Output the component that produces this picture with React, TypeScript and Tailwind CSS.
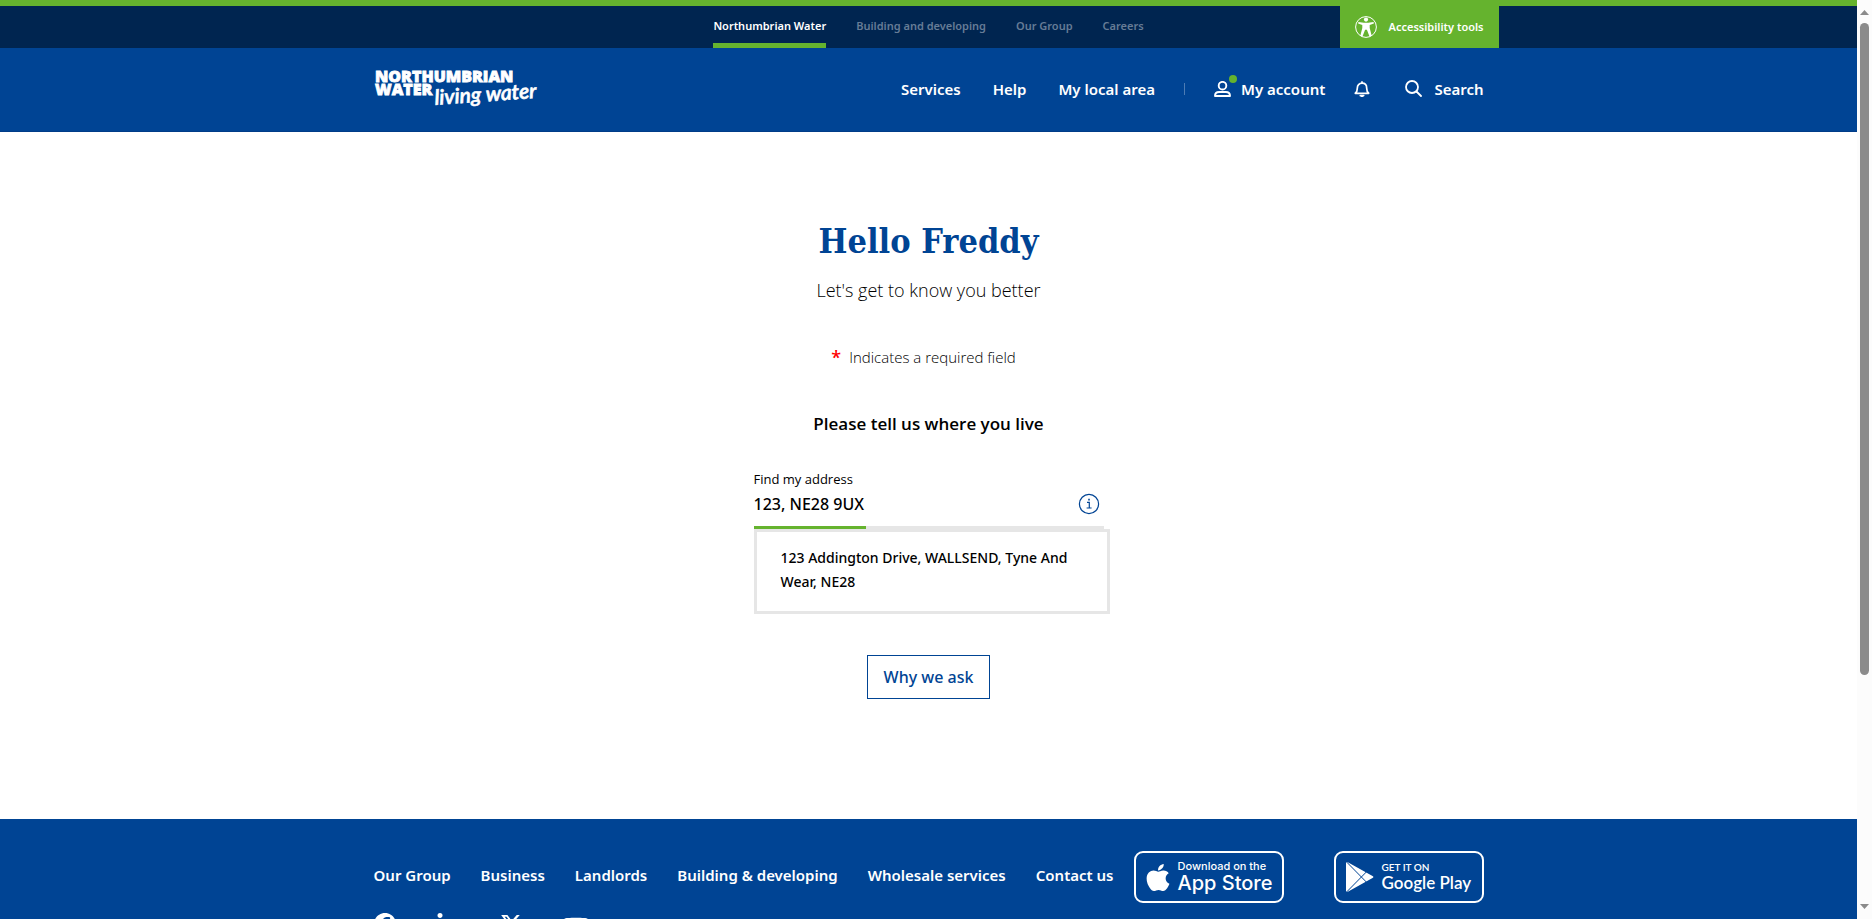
import { useState } from "react";
import type { ReactNode } from "react";
import { FaApple, FaFacebook, FaLinkedinIn, FaXTwitter, FaYoutube } from "react-icons/fa6";

const siteLinks = [
  { label: "Northumbrian Water", active: true },
  { label: "Building and developing", active: false },
  { label: "Our Group", active: false },
  { label: "Careers", active: false },
];

const mainLinks = ["Services", "Help", "My local area"];

const footerLinks = [
  "Our Group",
  "Business",
  "Landlords",
  "Building & developing",
  "Wholesale services",
  "Contact us",
];

function AccessibilityIcon() {
  return (
    <svg viewBox="0 0 22 22" className="size-[22px] shrink-0" aria-hidden="true">
      <circle cx="11" cy="11" r="10.4" fill="none" stroke="white" strokeWidth="1" />
      <circle cx="11" cy="3.6" r="2.1" fill="white" />
      <path
        d="M3.4 5.900 8.800 6.700h4.400l5.400-.8.3 1.700-4.200 1.400v3.100l2 7.700-2.200.6-2.600-6.600h-1.800l-2.600 6.600-2.200-.6 2-7.700V9L3.100 7.600z"
        fill="white"
      />
    </svg>
  );
}

function UserIcon() {
  return (
    <svg viewBox="0 0 17 16" className="h-4 w-[17px]" fill="none" stroke="white" strokeWidth="1.9" strokeLinejoin="round" aria-hidden="true">
      <circle cx="8.5" cy="4.7" r="3.8" />
      <path d="M1 15.050c0-2.600 1.900-4 4.100-4h6.800c2.200 0 4.100 1.400 4.100 4z" />
    </svg>
  );
}

function BellIcon() {
  return (
    <svg viewBox="0 0 16 16" className="size-4" fill="none" stroke="white" strokeWidth="1.7" strokeLinejoin="round" strokeLinecap="round" aria-hidden="true">
      <path d="M1.300 12.300c1.700-1.300 2-2.600 2-5.100 0-3 1.900-5 4.700-5s4.700 2 4.700 5c0 2.500.3 3.800 2 5.100z" />
      <path d="M8 .9v1" />
      <path d="M6.300 14.600h3.400l-1.700.8z" fill="white" />
    </svg>
  );
}

function SearchIcon() {
  return (
    <svg viewBox="0 0 17 17" className="size-[17px]" fill="none" stroke="white" strokeWidth="1.8" strokeLinecap="round" aria-hidden="true">
      <circle cx="7" cy="7" r="6" />
      <path d="M11.500 11.500 16 16" />
    </svg>
  );
}

function InfoIcon() {
  return (
    <svg viewBox="0 0 22 22" className="size-[22px]" fill="none" stroke="#004494" strokeWidth="1.2" aria-hidden="true">
      <circle cx="11" cy="11" r="9.6" />
      <path d="M9 9.400h2.300v5.600M8.600 15h5" />
      <path d="M10.200 6.700h1.600" strokeWidth="1.7" />
    </svg>
  );
}

function PlayIcon() {
  return (
    <svg viewBox="0 0 28 30" className="h-[30px] w-7" aria-hidden="true">
      <path d="M0 1.200C0 .2.900-.2 1.800.3L26.500 13.900c1.200.7 1.200 1.600 0 2.200L1.800 29.700C.9 30.200 0 29.800 0 28.800z" fill="white" />
      <path d="M.6 0 20.300 20M.6 30 20.300 10" stroke="#004494" strokeWidth="1" fill="none" />
    </svg>
  );
}

function Logo() {
  return (
    <svg viewBox="0 0 168 42" className="h-[42px] w-[168px] overflow-visible" role="img" aria-label="Northumbrian Water living water">
      <g fill="white" stroke="white">
        <text x="1" y="13" fontFamily="Open Sans, sans-serif" fontWeight="800" fontSize="16" strokeWidth="0.8">
          NORTHUMBRIAN
        </text>
        <text x="1" y="26" fontFamily="Open Sans, sans-serif" fontWeight="800" fontSize="16" strokeWidth="0.8">
          WATER
        </text>
        <text x="61" y="36" fontFamily="Lato, sans-serif" fontStyle="italic" fontWeight="600" fontSize="21" strokeWidth="0.6" transform="rotate(-4 61 36)">
          living water
        </text>
      </g>
    </svg>
  );
}

function Badge({ icon, children }: { icon: ReactNode; children: ReactNode }) {
  return (
    <a href="#" className="flex h-[52px] w-[150px] items-center gap-2 rounded-[9px] border-2 border-white pl-[10px] text-white">
      {icon}
      <span className="flex flex-col whitespace-nowrap">{children}</span>
    </a>
  );
}

function Header() {
  return (
    <header className="border-t-[6px] border-[#65b32e] font-['Noto_Sans',sans-serif] font-semibold text-white">
      <div className="bg-[#002550]">
        <div className="mx-auto grid h-[42px] max-w-[1140px] grid-cols-[1fr_auto_1fr] text-[11px] leading-4">
          <nav aria-label="Sites" className="col-start-2 flex gap-[30px]">
            {siteLinks.map((link) => (
              <a
                key={link.label}
                href="#"
                className={
                  link.active
                    ? "flex items-center border-t-[3px] border-b-[5px] border-t-transparent border-b-[#65b32e]"
                    : "flex items-center border-t-[3px] border-b-[5px] border-transparent text-[#667c96]"
                }
              >
                {link.label}
              </a>
            ))}
          </nav>
          <button type="button" className="flex items-center gap-3 justify-self-end bg-[#65b32e] px-[15px]">
            <AccessibilityIcon />
            Accessibility tools
          </button>
        </div>
      </div>
      <div className="border-b border-[#003c88] bg-[#004494]">
        <div className="mx-auto flex h-[83px] max-w-[1140px] items-center justify-between px-[15px] text-[15px] leading-6">
          <a href="#">
            <Logo />
          </a>
          <div className="flex items-center pb-[2px]">
            <nav aria-label="Main" className="flex gap-8">
              {mainLinks.map((label) => (
                <a key={label} href="#">
                  {label}
                </a>
              ))}
            </nav>
            <span className="mx-[29px] h-3 w-px bg-[#4d7cb4]" />
            <a href="#" className="flex items-center gap-[10px]">
              <span className="relative">
                <UserIcon />
                <span className="absolute -top-1.5 -right-1.5 size-2 rounded-full bg-[#65b32e]" />
              </span>
              My account
            </a>
            <button type="button" aria-label="Notifications" className="mr-[35px] ml-[29px]">
              <BellIcon />
            </button>
            <button type="button" className="flex items-center gap-3">
              <SearchIcon />
              Search
            </button>
          </div>
        </div>
      </div>
    </header>
  );
}

function AddressForm() {
  const [address, setAddress] = useState("123, NE28 9UX");
  return (
    <main className="flex flex-col items-center bg-white pt-[89px] pb-[120px] text-black">
      <h1 className="font-['DejaVu_Serif_Condensed','DejaVu_Serif',serif] text-[34px] leading-10 font-bold text-[#004494]">Hello Freddy</h1>
      <p className="mt-[15px] text-[18px] leading-7 font-light">Let's get to know you better</p>
      <p className="mt-[41px] flex gap-2 pr-[10px] text-[15px] leading-6 font-light">
        <span className="text-[18px] font-semibold text-[#ff0000]">*</span>
        Indicates a required field
      </p>
      <h2 className="mt-[41px] text-[17px] leading-7 font-semibold">Please tell us where you live</h2>
      <form className="mt-[31px] w-[350px]" onSubmit={(event) => event.preventDefault()}>
        <label htmlFor="address" className="block text-[13px] leading-5">
          Find my address
        </label>
        <div className="mt-[3px] flex items-center justify-between pr-[4px] pb-[10px]">
          <input
            id="address"
            type="text"
            value={address}
            onChange={(event) => setAddress(event.target.value)}
            className="h-6 min-w-0 flex-1 font-['Noto_Sans',sans-serif] text-[16px] leading-6 font-medium outline-none"
          />
          <button type="button" aria-label="Address help">
            <InfoIcon />
          </button>
        </div>
        <div className="h-[3px] bg-[#e6e6e6]">
          <div className="h-[3px] w-28 bg-[#65b32e]" />
        </div>
        <ul aria-label="Matching addresses" className="w-[356px] border-[3px] border-[#e6e6e6] bg-white px-6 pt-[14px] pb-[17px]">
          <li>
            <button type="button" className="block text-left font-['Noto_Sans',sans-serif] text-[14px] leading-6 font-medium">
              123 Addington Drive, WALLSEND, Tyne And Wear, NE28
            </button>
          </li>
        </ul>
      </form>
      <button type="button" className="mt-[41px] h-11 border border-[#004494] px-4 font-['Noto_Sans',sans-serif] text-[16px] leading-6 font-medium text-[#004494]">
        Why we ask
      </button>
    </main>
  );
}

function Footer() {
  return (
    <footer className="flex-1 bg-[#004494] pt-8 pb-16 text-white">
      <div className="mx-auto max-w-[1140px] px-[15px]">
        <div className="flex items-center justify-between">
          <nav aria-label="Footer" className="flex gap-[30px] pb-1 font-['Noto_Sans',sans-serif] text-[15px] leading-6 font-semibold whitespace-nowrap">
            {footerLinks.map((label) => (
              <a key={label} href="#">
                {label}
              </a>
            ))}
          </nav>
          <div className="flex gap-[50px]">
            <Badge icon={<FaApple className="h-[31px] w-6 shrink-0" />}>
              <span className="font-['Inter',sans-serif] text-[11px] leading-3 font-medium">Download on the</span>
              <span className="font-['Inter',sans-serif] text-[20px] leading-[22px] font-medium">App Store</span>
            </Badge>
            <Badge icon={<PlayIcon />}>
              <span className="font-['Lato',sans-serif] text-[10px] leading-3 font-semibold">GET IT ON</span>
              <span className="font-['Lato',sans-serif] text-[17px] leading-5 font-semibold">Google Play</span>
            </Badge>
          </div>
        </div>
        <div className="mt-[10px] flex items-start gap-10">
          <a href="#" aria-label="Facebook">
            <FaFacebook className="size-[22px]" />
          </a>
          <a href="#" aria-label="LinkedIn">
            <FaLinkedinIn className="size-6" />
          </a>
          <a href="#" aria-label="X">
            <FaXTwitter className="size-[22px]" />
          </a>
          <a href="#" aria-label="YouTube">
            <FaYoutube className="size-7" />
          </a>
        </div>
      </div>
    </footer>
  );
}

function Scrollbar() {
  return (
    <div aria-hidden="true" className="flex w-[15px] shrink-0 flex-col items-center bg-[#fcfcfc] py-[10px]">
      <svg viewBox="0 0 9 5" className="h-[5px] w-[9px]">
        <path d="M4.500 0 9 5H0z" fill="#8b8b8b" />
      </svg>
      <div className="mt-2 flex w-[9px] flex-1 flex-col">
        <div className="h-[74%] rounded-full bg-[#8b8b8b]" />
      </div>
      <svg viewBox="0 0 9 5" className="h-[5px] w-[9px]">
        <path d="M0 0h9L4.500 5z" fill="#8b8b8b" />
      </svg>
    </div>
  );
}

export default function App() {
  return (
    <div className="flex h-screen overflow-hidden bg-white font-['Open_Sans',sans-serif]">
      <div className="flex min-w-0 flex-1 flex-col overflow-hidden">
        <Header />
        <AddressForm />
        <Footer />
      </div>
      <Scrollbar />
    </div>
  );
}
